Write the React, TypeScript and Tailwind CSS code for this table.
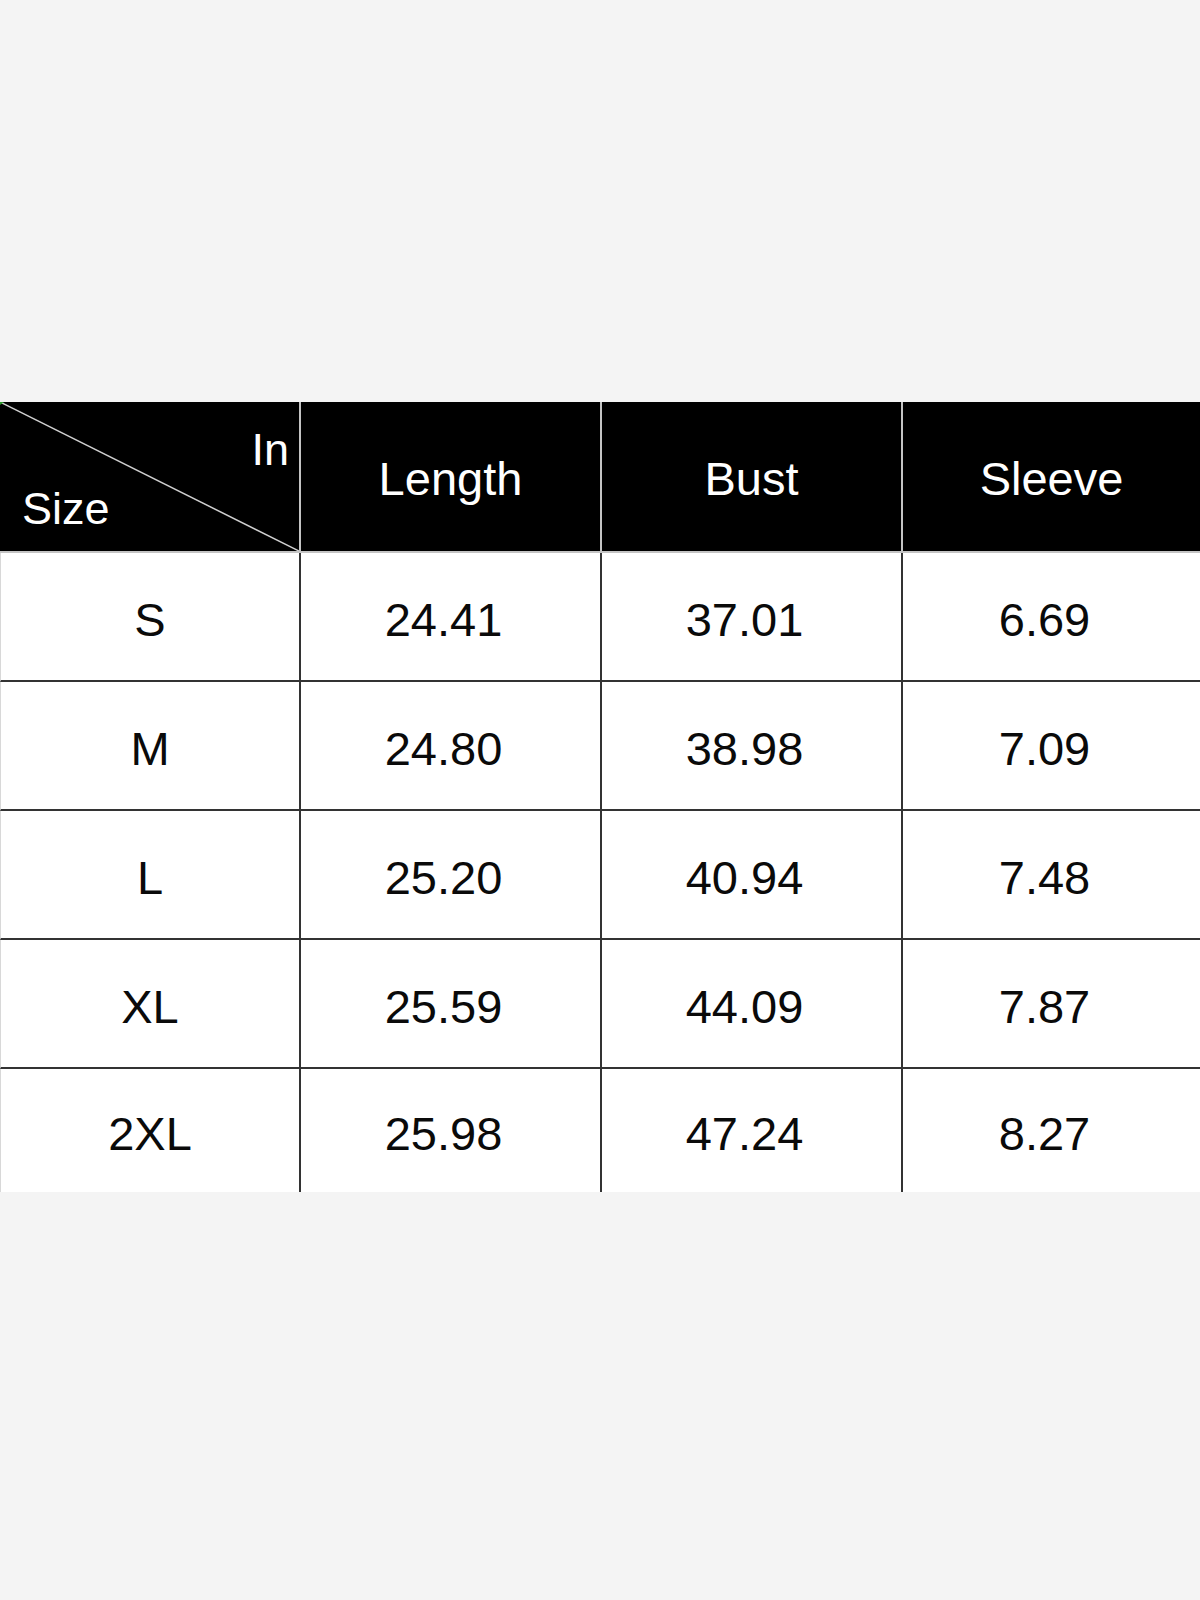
import React from 'react';

const rows = [
  { size: 'S', length: '24.41', bust: '37.01', sleeve: '6.69' },
  { size: 'M', length: '24.80', bust: '38.98', sleeve: '7.09' },
  { size: 'L', length: '25.20', bust: '40.94', sleeve: '7.48' },
  { size: 'XL', length: '25.59', bust: '44.09', sleeve: '7.87' },
  { size: '2XL', length: '25.98', bust: '47.24', sleeve: '8.27' },
];

const headers = ['Length', 'Bust', 'Sleeve'];

const App = () => {
  return (
    <div className="min-h-screen bg-[#f4f4f4] pt-[402px] font-['Liberation_Sans',Arial,sans-serif]">
      <div className="grid grid-cols-[301px_301px_301px_1fr]">
        {/* header row */}
        <div className="relative h-[151px] bg-black border-r-2 border-b-2 border-[#c4c4c4] flex flex-col justify-between pt-[25px] pb-[20px] pl-[22px] pr-[10px] text-white text-[45px] leading-none">
          <svg className="absolute inset-0 w-full h-full" viewBox="0 0 299 149" preserveAspectRatio="none">
            <line x1="0" y1="0" x2="299" y2="149" stroke="#d0d0d0" strokeWidth="1.5" />
            <polygon points="0,0 4,0 0,3" fill="#2e9e2e" />
          </svg>
          <span className="relative self-end">In</span>
          <span className="relative self-start">Size</span>
        </div>
        {headers.map((h, i) => (
          <div
            key={h}
            className={`h-[151px] bg-black border-b-2 border-[#c4c4c4] flex items-center justify-center pt-[4px] text-white text-[47px] leading-none ${i < 2 ? 'border-r-2' : ''}`}
          >
            {h}
          </div>
        ))}

        {/* body rows */}
        {rows.map((r, idx) => {
          const last = idx === rows.length - 1;
          const rowCls = last ? 'h-[123px] pt-[5px]' : 'h-[129px] border-b-2 pt-[5px]';
          return (
            <React.Fragment key={r.size}>
              <div className={`${rowCls} bg-white border-l border-l-[#d8d8d8] border-r-2 border-[#333] flex items-center justify-center text-[#0a0a0a] text-[47px] leading-none`}>
                {r.size}
              </div>
              <div className={`${rowCls} bg-white border-r-2 border-[#333] flex items-center justify-center pr-[14px] text-[#0a0a0a] text-[47px] leading-none`}>
                {r.length}
              </div>
              <div className={`${rowCls} bg-white border-r-2 border-[#333] flex items-center justify-center pr-[14px] text-[#0a0a0a] text-[47px] leading-none`}>
                {r.bust}
              </div>
              <div className={`${rowCls} bg-white border-[#333] flex items-center justify-center pr-[14px] text-[#0a0a0a] text-[47px] leading-none`}>
                {r.sleeve}
              </div>
            </React.Fragment>
          );
        })}
      </div>
    </div>
  );
};

export default App;
